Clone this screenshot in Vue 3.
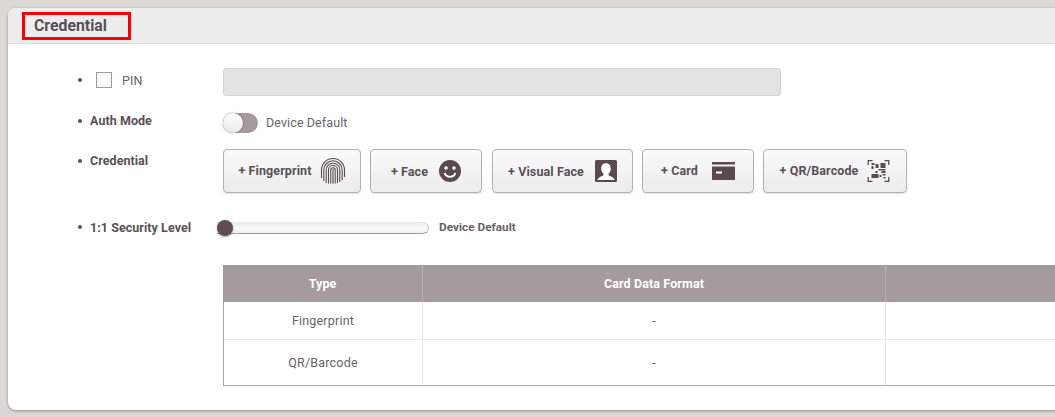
<template>
  <div class="page">
    <section class="card">
      <header class="card-head">
        <h2 class="title">Credential</h2>
      </header>

      <div class="card-body">
        <div class="row row-pin">
          <div class="label plain">
            <span class="dot"></span>
            <span class="check"></span>
            <span class="pin-text">PIN</span>
          </div>
          <div class="pin-input"></div>
        </div>

        <div class="row row-auth">
          <div class="label"><span class="dot"></span>Auth Mode</div>
          <div class="toggle-wrap">
            <span class="toggle"><span class="knob"></span></span>
            <span class="toggle-text">Device Default</span>
          </div>
        </div>

        <div class="row row-cred">
          <div class="label"><span class="dot"></span>Credential</div>
          <div class="buttons">
            <button v-for="b in buttons" :key="b.name" class="add-btn" :class="b.cls">
              <span class="btn-text">+ {{ b.name }}</span>
              <svg v-if="b.icon === 'finger'" class="ico" width="26" height="26" viewBox="0 0 26 26" fill="none" stroke="#5a4a50" stroke-width="1.1">
                <path d="M1.500 20V12a11.500 11.500 0 0 1 23 0v7" />
                <path d="M3.800 23V12a9.200 9.200 0 0 1 18.400 0v10" />
                <path d="M6.200 25V12a6.800 6.800 0 0 1 13.600 0v12" />
                <path d="M8.500 25.500V12a4.500 4.500 0 0 1 9 0v13" />
                <path d="M10.800 25.500V12a2.200 2.200 0 0 1 4.400 0v13.500" />
                <path d="M13 11v14.500" />
              </svg>
              <svg v-else-if="b.icon === 'face'" class="ico" width="22" height="22" viewBox="0 0 22 22">
                <circle cx="11" cy="11" r="11" fill="#5a4a50" />
                <circle cx="7" cy="8" r="1.800" fill="#fff" />
                <circle cx="15" cy="8" r="1.800" fill="#fff" />
                <path d="M5.500 13c1.200 2.600 3.200 3.800 5.500 3.800s4.300-1.200 5.500-3.800" fill="none" stroke="#fff" stroke-width="1.800" />
              </svg>
              <svg v-else-if="b.icon === 'visual'" class="ico" width="22" height="22" viewBox="0 0 22 22">
                <rect width="22" height="22" rx="1.500" fill="#5a4a50" />
                <path d="M11 3.200c3 0 4.800 2.200 4.800 5.300 0 2.300-1 4.200-2.300 5.200v1.300c0 .9 4.800 1.700 6 4.500v.5H2.500v-.5c1.200-2.800 6-3.600 6-4.500v-1.300C7.200 12.700 6.200 10.800 6.200 8.500c0-3.100 1.800-5.300 4.800-5.300z" fill="#fff" />
              </svg>
              <svg v-else-if="b.icon === 'card'" class="ico" width="23" height="18" viewBox="0 0 23 18">
                <rect width="23" height="2.500" fill="#5a4a50" />
                <rect y="4.500" width="23" height="13.500" fill="#5a4a50" />
                <rect x="4" y="9.500" width="6" height="2" fill="#fff" />
              </svg>
              <svg v-else class="ico" width="23" height="22" viewBox="0 0 22 22" fill="none" stroke="#5a4a50">
                <path d="M.7 5V.7H5M17 .7h4.300V5M.7 17v4.300H5M17 21.300h4.300V17" stroke-width="1.300" />
                <g fill="#5a4a50" stroke="none">
                  <rect x="4" y="3" width="3" height="2" />
                  <rect x="8" y="4" width="3" height="4" />
                  <rect x="13" y="3" width="5" height="5" />
                  <rect x="4" y="6" width="2" height="3" />
                  <rect x="11" y="9" width="7" height="1.500" />
                  <rect x="8" y="11" width="2" height="2" />
                  <rect x="14" y="11" width="4" height="2" />
                  <rect x="4" y="14" width="7" height="4" />
                  <rect x="12" y="15" width="2" height="2" />
                  <rect x="15" y="14" width="3" height="1.500" />
                  <rect x="16" y="17" width="2" height="1.500" />
                </g>
              </svg>
            </button>
          </div>
        </div>

        <div class="row row-level">
          <div class="label"><span class="dot"></span>1:1 Security Level</div>
          <div class="slider-wrap">
            <span class="slider"><span class="thumb"></span></span>
            <span class="slider-text">Device Default</span>
          </div>
        </div>

        <div class="table">
          <div class="tr th">
            <div class="c1">Type</div>
            <div class="c2">Card Data Format</div>
            <div class="c3"></div>
          </div>
          <div v-for="r in rows" :key="r" class="tr td" :class="{ last: r === 'QR/Barcode' }">
            <div class="c1">{{ r }}</div>
            <div class="c2">-</div>
            <div class="c3"></div>
          </div>
        </div>
      </div>
    </section>
  </div>
</template>

<script setup>
const buttons = [
  { name: 'Fingerprint', icon: 'finger', cls: 'b-finger' },
  { name: 'Face', icon: 'face', cls: 'b-face' },
  { name: 'Visual Face', icon: 'visual', cls: 'b-visual' },
  { name: 'Card', icon: 'card', cls: 'b-card' },
  { name: 'QR/Barcode', icon: 'qr', cls: 'b-qr' }
]

const rows = ['Fingerprint', 'QR/Barcode']
</script>

<style>
html, body {
  margin: 0;
  background: #dcd8d4;
  overflow: hidden;
}
</style>

<style scoped>
.page {
  height: 417px;
  padding: 8px 0 0 8px;
  box-sizing: border-box;
  background: #dcd8d4;
  overflow: hidden;
  font-family: Roboto, "Liberation Sans", sans-serif;
  color: #5a5056;
}

.card {
  width: 1100px;
  height: 402px;
  background: #fff;
  border-radius: 8px 0 0 8px;
  box-shadow: 0 1px 3px rgba(90, 80, 80, 0.55);
  overflow: hidden;
}

.card-head {
  height: 36px;
  box-sizing: border-box;
  padding: 4px 0 0 14px;
  background: #ededed;
  border-bottom: 1px solid #dcdcdc;
}

.title {
  width: 109px;
  height: 28px;
  margin: 0;
  box-sizing: border-box;
  padding-left: 9px;
  border: 3px solid #f00;
  font-size: 15.800px;
  font-weight: 700;
  line-height: 21px;
  color: #595159;
}

.card-body {
  padding: 24px 0 0 69px;
}

.row {
  display: flex;
  align-items: flex-start;
}

.label {
  display: flex;
  align-items: center;
  width: 146px;
  font-size: 12.500px;
  font-weight: 700;
  letter-spacing: 0.05px;
  color: #5a5056;
}

.dot {
  width: 4px;
  height: 4px;
  margin: 0 8px 0 1px;
  border-radius: 50%;
  background: #5a5056;
}

.label.plain {
  font-weight: 400;
  height: 24px;
}

.check {
  width: 14px;
  height: 14px;
  margin: 0 10px 0 6px;
  border: 1px solid #a09a9c;
}

.pin-text {
  font-size: 12.500px;
  letter-spacing: 0.1px;
  color: #6c6369;
}

.pin-input {
  width: 556px;
  height: 26px;
  border: 1px solid #d3d3d3;
  border-radius: 3px;
  background: #e4e4e4;
}

.row-auth {
  margin-top: 17px;
  height: 20px;
}

.row-auth .label {
  height: 15px;
}

.toggle-wrap {
  display: flex;
  align-items: center;
  height: 20px;
}

.toggle {
  display: block;
  position: relative;
  width: 35px;
  height: 20px;
  border-radius: 10px;
  background: #a59a9d;
}

.knob {
  position: absolute;
  left: 0;
  top: 0;
  width: 20px;
  height: 20px;
  border-radius: 50%;
  background: linear-gradient(#fff, #e8e8e8);
  box-shadow: 0 0 2px rgba(0, 0, 0, 0.45);
}

.toggle-text {
  margin-left: 8px;
  padding-bottom: 2px;
  font-size: 12.500px;
  letter-spacing: 0.1px;
  color: #6c6369;
}

.row-cred {
  margin-top: 16px;
}

.row-cred .label {
  height: 23px;
}

.buttons {
  display: flex;
  gap: 9px;
}

.add-btn {
  display: flex;
  align-items: center;
  justify-content: center;
  height: 44px;
  padding: 0;
  box-sizing: border-box;
  border: 1px solid #b5b1b1;
  border-radius: 4px;
  background: linear-gradient(#fafafa, #ececec);
  box-shadow: 0 1px 1px rgba(0, 0, 0, 0.12);
  font-family: inherit;
  font-size: 12.500px;
  font-weight: 700;
  letter-spacing: 0.1px;
  color: #5a5056;
}

.btn-text {
  padding-bottom: 2px;
}

.b-face .btn-text,
.b-visual .btn-text {
  padding-bottom: 0;
}

.ico {
  flex: none;
}

.b-finger { width: 138px; gap: 8px; }
.b-face { width: 112px; gap: 11px; margin-right: 1px; }
.b-visual { width: 141px; gap: 11px; }
.b-card { width: 112px; gap: 14px; }
.b-qr { width: 144px; gap: 9px; }

.row-level {
  margin-top: 28px;
  height: 13px;
}

.row-level .label {
  height: 12px;
}

.slider-wrap {
  display: flex;
  align-items: center;
  height: 14px;
  margin-left: -6px;
}

.slider {
  display: block;
  position: relative;
  width: 212px;
  height: 12px;
  border-radius: 0 6px 6px 0;
  background: linear-gradient(#e9e9e9, #fafafa 50%, #f2f2f2);
  border-bottom: 1px solid #a59a9d;
  border-right: 1px solid #c8c4c4;
  box-sizing: border-box;
}

.thumb {
  position: absolute;
  left: 0;
  top: -2px;
  width: 16px;
  height: 16px;
  border-radius: 50%;
  background: #5e4d54;
  box-shadow: 0 1px 2px rgba(0, 0, 0, 0.35);
}

.slider-text {
  margin-left: 10px;
  padding-bottom: 2px;
  font-size: 11.800px;
  font-weight: 700;
  color: #6a6066;
}

.table {
  margin: 31px 0 0 146px;
  width: 1000px;
  border-left: 1px solid #a5a5a5;
  border-bottom: 1px solid #a5a5a5;
  font-size: 12.500px;
}

.tr {
  display: grid;
  grid-template-columns: 198px 463px 1fr;
  text-align: center;
}

.tr > div + div {
  border-left: 1px solid #e6e6e6;
}

.th {
  height: 37px;
  margin-left: -1px;
  grid-template-columns: 199px 463px 1fr;
  background: #a59a9d;
  color: #fff;
  font-weight: 700;
  letter-spacing: 0.1px;
  line-height: 37px;
}

.th > div + div {
  border-left: 1px solid #b7aeb0;
}

.td {
  height: 38px;
  line-height: 38px;
  border-bottom: 1px solid #e9e9e9;
  box-sizing: border-box;
  color: #6c6369;
  letter-spacing: 0.2px;
}

.td.last {
  height: 45px;
  line-height: 45px;
  border-bottom: 0;
}
</style>
